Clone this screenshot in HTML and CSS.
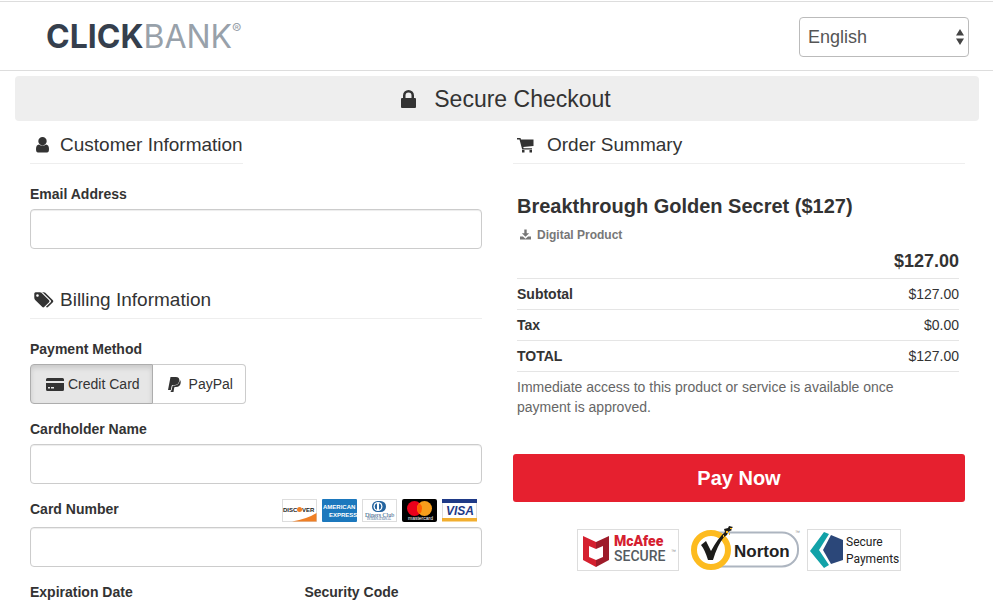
FILE: index.html
```html
<!DOCTYPE html>
<html lang="en">
<head>
    <meta charset="UTF-8">
    <meta name="viewport" content="width=device-width, initial-scale=1.0">
    <title>ClickBank - Secure Checkout</title>
    <link rel="stylesheet" href="styles.css">
</head>
<body>
    <header class="header">
        <a class="logo" href="#"><span class="logo-click">CLICK</span><span class="logo-bank">BANK</span><span class="logo-reg">®</span></a>
        <div class="language">
            <select class="language-select" aria-label="Language">
                <option>English</option>
            </select>
            <svg class="language-arrows" viewBox="0 0 8 16" aria-hidden="true"><path d="M0 6.500L4 0l4 6.500zM0 9.500h8L4 16z"/></svg>
        </div>
    </header>

    <main class="page">
        <h1 class="banner">
            <svg class="icon-lock" viewBox="0 0 15 18" aria-hidden="true"><path d="M0 9q0-1 1-1h1V5.500a5.500 5.500 0 0 1 11 0V8h1q1 0 1 1v8q0 1-1 1H1q-1 0-1-1zM4.500 8h6V5.500a3 3 0 0 0-6 0z"/></svg>
            Secure Checkout
        </h1>

        <div class="columns">
            <form class="details">
                <h2 class="section-title section-title-short">
                    <svg class="icon" viewBox="0 0 24 18" aria-hidden="true"><path d="M12.500 1a4.200 4.200 0 0 1 4.200 4.200c0 2-1.800 4.200-4.200 4.200S8.300 7.200 8.300 5.200A4.200 4.200 0 0 1 12.500 1zM9 8.500q3.500 2.600 7 0 3 .3 3 4.500 0 3.500-2 3.500H8q-2 0-2-3.500 0-4.200 3-4.500z"/></svg>
                    Customer Information
                </h2>
                <div class="form-group">
                    <label for="email">Email Address</label>
                    <input type="email" id="email" class="form-control">
                </div>

                <h2 class="section-title section-title-next">
                    <svg class="icon" viewBox="-300 0 2400 1800" aria-hidden="true"><path d="M576 448q0-53-37.500-90.500t-90.500-37.500-90.500 37.500-37.500 90.500 37.500 90.500 90.500 37.500 90.500-37.500 37.500-90.500zm1067 576q0 53-37 90l-491 492q-39 37-91 37-53 0-90-37l-715-716q-38-37-64.500-101t-26.500-117v-416q0-52 38-90t90-38h416q53 0 117 26.500t102 64.500l715 714q37 39 37 91zm384 0q0 53-37 90l-491 492q-39 37-91 37-36 0-59-14t-53-45l470-470q37-37 37-90 0-52-37-91l-715-714q-38-38-102-64.500t-117-26.500h224q53 0 117 26.500t102 64.500l715 714q37 39 37 91z"/></svg>
                    Billing Information
                </h2>
                <div class="form-group">
                    <span class="label" id="method">Payment Method</span>
                    <div class="btn-group" role="group" aria-labelledby="method">
                        <button type="button" class="btn active" aria-pressed="true">
                            <svg class="icon-card" viewBox="0 0 18 13" aria-hidden="true"><path d="M0 3V1.500Q0 0 1.500 0h15Q18 0 18 1.500V3zM0 5h18v6.500q0 1.500-1.500 1.500h-15Q0 13 0 11.500zM2 9v1.500h2V9zm3 0v1.500h3V9z"/></svg>
                            Credit Card
                        </button>
                        <button type="button" class="btn" aria-pressed="false">
                            <svg class="icon-paypal" viewBox="0 0 13 15" aria-hidden="true"><path d="M2.500 0h5.300q4 .2 3.500 3.700-.8 4.200-4.800 4.200H4.700q-.8 0-1 .8L2.800 13H0z"/><path d="M12 3q1 1 .7 3-.7 4-4.700 4H7q-.6 0-.8.800L5.500 15H2.600l.3-1.400h.6l1-4.500q.1-.6.7-.6h1.500Q11 8.300 12 3z"/></svg>
                            PayPal
                        </button>
                    </div>
                </div>
                <div class="form-group">
                    <label for="name">Cardholder Name</label>
                    <input type="text" id="name" class="form-control">
                </div>
                <div class="form-group">
                    <div class="label-row">
                        <label for="number">Card Number</label>
                        <div class="cards">
                            <svg class="card" viewBox="0 0 35 23" role="img" aria-label="Discover">
                                <rect x=".5" y=".5" width="34" height="22" fill="#fff" stroke="#ddd"/>
                                <path d="M34.500 14v8.500H10Q25 20 34.500 14z" fill="#ef7f25"/>
                                <text x="1" y="13" class="card-discover">DISC</text>
                                <circle cx="17.500" cy="10.500" r="2.500" fill="#ef7f25"/>
                                <text x="20" y="13" class="card-discover">VER</text>
                            </svg>
                            <svg class="card" viewBox="0 0 35 23" role="img" aria-label="American Express">
                                <rect width="35" height="23" rx="1" fill="#1c78bd"/>
                                <text x="1" y="10" class="card-amex">AMERICAN</text>
                                <text x="7" y="18" class="card-amex">EXPRESS</text>
                            </svg>
                            <svg class="card" viewBox="0 0 35 23" role="img" aria-label="Diners Club International">
                                <rect x=".5" y=".5" width="34" height="22" fill="#fff" stroke="#ddd"/>
                                <rect x="10" y="2" width="14" height="11" rx="5.500" fill="#24649f"/>
                                <circle cx="16" cy="7.500" r="4.500" fill="#fff"/>
                                <path d="M15 4.200a3.500 3.500 0 0 0 0 6.600zM17 4.200a3.500 3.500 0 0 1 0 6.600z" fill="#24649f"/>
                                <text x="3" y="18" class="card-diners">Diners Club</text>
                                <text x="5" y="21" class="card-diners-small">INTERNATIONAL</text>
                            </svg>
                            <svg class="card" viewBox="0 0 35 23" role="img" aria-label="Mastercard">
                                <rect width="35" height="23" rx="2" fill="#000"/>
                                <circle cx="12.500" cy="9.500" r="7.500" fill="#eb001b"/>
                                <circle cx="22.500" cy="9.500" r="7.500" fill="#f79e1b"/>
                                <path d="M17.500 3.900a7.500 7.500 0 0 1 0 11.200 7.500 7.500 0 0 1 0-11.200z" fill="#ff5f00"/>
                                <text x="6" y="21" class="card-master">mastercard</text>
                            </svg>
                            <svg class="card" viewBox="0 0 35 23" role="img" aria-label="Visa">
                                <rect width="35" height="23" fill="#fff"/>
                                <path d="M0 0h35v4H0z" fill="#1f3a87"/>
                                <path d="M0 19h35v3.500H0z" fill="#f2ae2e"/>
                                <path d="M.5 4v15M34.500 4v15" stroke="#ddd"/>
                                <text x="4" y="16" class="card-visa">VISA</text>
                            </svg>
                        </div>
                    </div>
                    <input type="text" id="number" class="form-control">
                </div>
                <div class="form-split">
                    <div class="form-group">
                        <label for="expiration">Expiration Date</label>
                        <input type="text" id="expiration" class="form-control">
                    </div>
                    <div class="form-group">
                        <label for="code">Security Code</label>
                        <input type="text" id="code" class="form-control">
                    </div>
                </div>
            </form>

            <section class="summary">
                <h2 class="section-title">
                    <svg class="icon" viewBox="0 0 24 18" aria-hidden="true"><path d="M4 2h3.500l.5 1.500h12.500V10l-10.200 1 .3 1.200H19v1.300H9.200L6.500 3.500H4z"/><path d="M9 14h2.500v2.500H9zM16.500 14H19v2.500h-2.500z"/></svg>
                    Order Summary
                </h2>
                <div class="order">
                    <h3 class="product">Breakthrough Golden Secret ($127)</h3>
                    <p class="product-type">
                        <svg class="icon-download" viewBox="0 0 12 12" aria-hidden="true"><path d="M4.700 0h2.600v4H10L6 8 2 4h2.700zM0 7.500h3.200L6 10.200l2.800-2.700H12V11H0z"/></svg>
                        Digital Product
                    </p>
                    <p class="price">$127.00</p>
                    <table class="totals">
                        <tbody>
                            <tr><th scope="row">Subtotal</th><td>$127.00</td></tr>
                            <tr><th scope="row">Tax</th><td>$0.00</td></tr>
                            <tr><th scope="row">TOTAL</th><td>$127.00</td></tr>
                        </tbody>
                    </table>
                    <p class="note">Immediate access to this product or service is available once payment is approved.</p>
                </div>
                <button type="button" class="btn-pay">Pay Now</button>
                <div class="badges">
                    <svg class="badge-mcafee" viewBox="0 0 102 42" role="img" aria-label="McAfee Secure">
                        <rect x=".5" y=".5" width="101" height="41" fill="#fff" stroke="#ddd"/>
                        <path d="M6 7l13 6v7l-7-3v11l7 3v7L6 31z" fill="#d5202f"/>
                        <path d="M32 7l-13 6v7l7-3v11l-7 3v7l13-7z" fill="#9e1c2a"/>
                        <text x="37" y="17" class="mcafee-name">McAfee</text>
                        <text x="37" y="32" class="mcafee-secure">SECURE</text>
                        <text x="94" y="24" class="badge-tm">™</text>
                    </svg>
                    <svg class="badge-norton" viewBox="0 0 110 46" role="img" aria-label="Norton">
                        <rect x="13" y="7.500" width="94" height="34" rx="16" fill="#fff" stroke="#adb5c0" stroke-width="2"/>
                        <circle cx="20" cy="25" r="17" fill="#fff" stroke="#fdbb1f" stroke-width="6"/>
                        <path d="M10 20l5-4 5 10Q27 13 34 7l-1-3 4-1 1-2 4 1-2 2 1 1-4 2-1 3-3 2Q26 21 22 35h-5Q14 25 10 20z" fill="#1c1c1a"/>
                        <path d="M35 6h2v2h-2zM39 3h2v1h-2zM32 10h1v2h-1zM38 8h1v2h-1z" fill="#fdbb1f"/>
                        <text x="43" y="32" class="norton-name">Norton</text>
                        <text x="104" y="9" class="badge-tm">™</text>
                    </svg>
                    <svg class="badge-secure" viewBox="0 0 94 42" role="img" aria-label="Secure Payments">
                        <rect x=".5" y=".5" width="93" height="41" fill="#fff" stroke="#ddd"/>
                        <path d="M17 3l5 2-10 16 10 15-5 3L3 22z" fill="#12a2a8"/>
                        <path d="M24 6l12 5v20l-12 4-8-14z" fill="#2b4779"/>
                        <text x="39" y="17" class="secure-text">Secure</text>
                        <text x="39" y="34" class="secure-text">Payments</text>
                    </svg>
                </div>
            </section>
        </div>
    </main>
</body>
</html>
```
FILE: styles.css
```css
* { box-sizing: border-box; }
body { margin: 0; background: #fff; color: #333; font-family: "Liberation Sans", Arial, sans-serif; font-size: 14px; line-height: 20px; }
h1, h2, h3, p { margin: 0; }
svg { display: block; fill: currentColor; flex: none; }

/* header */
.header { display: flex; justify-content: space-between; align-items: center; margin-top: 1px; padding: 15px 24px 13px 46px; border-top: 1px solid #ddd; border-bottom: 1px solid #ddd; }
.logo { display: flex; font-family: Inter, sans-serif; font-size: 32px; line-height: 40px; color: #353f4d; text-decoration: none; }
.logo-click { font-weight: 700; }
.logo-bank { font-weight: 400; color: #98a1aa; }
.logo-reg { font-size: 14px; line-height: 24px; color: #98a1aa; }
.language { position: relative; width: 170px; }
.language-select { appearance: none; width: 100%; height: 40px; padding: 0 8px; border: 1px solid #bbb; border-radius: 4px; background: #fff; color: #555; font: inherit; font-size: 18px; }
.language-arrows { position: absolute; right: 5px; top: 12px; width: 8px; height: 16px; color: #444; pointer-events: none; }

.page { padding: 5px 14px 0 15px; }
.banner { display: flex; justify-content: center; align-items: center; gap: 18px; padding-left: 18px; height: 45px; border-radius: 4px; background: #eee; font-size: 23px; font-weight: 400; }
.icon-lock { width: 15px; height: 18px; }
.columns { display: grid; grid-template-columns: 1fr 1fr; gap: 31px; padding: 12px 14px 0 15px; }

.section-title { display: flex; align-items: center; gap: 6px; padding-bottom: 6px; margin-bottom: 20px; border-bottom: 1px solid #eee; font-size: 19px; font-weight: 400; line-height: 24px; }
.section-title-short { width: fit-content; }
.section-title-next { margin-top: 39px; }
.icon { width: 24px; height: 18px; }

/* form */
.form-group { margin-bottom: 15px; }
label, .label { display: block; margin-bottom: 5px; font-weight: 700; }
.form-control { display: block; width: 100%; height: 40px; padding: 6px 12px; border: 1px solid #ccc; border-radius: 4px; background: #fff; font: inherit; box-shadow: inset 0 1px 1px rgba(0, 0, 0, .075); }
.btn-group { display: flex; }
.btn { display: flex; align-items: center; gap: 8px; height: 40px; padding: 0 12px 0 15px; border: 1px solid #ccc; border-left: 0; border-radius: 0 4px 4px 0; background: #fff; color: #333; font: inherit; }
.btn.active { gap: 4px; border: 1px solid #adadad; border-radius: 4px 0 0 4px; background: #e6e6e6; box-shadow: inset 0 3px 5px rgba(0, 0, 0, .125); }
.icon-card { width: 18px; height: 13px; }
.icon-paypal { width: 13px; height: 15px; }
.label-row { display: flex; justify-content: space-between; margin-bottom: 5px; }
.label-row label { margin: 0; }
.cards { display: flex; gap: 5px; margin-right: 5px; }
.card { width: 35px; height: 23px; }
.card-discover { font: bold 6px "Liberation Sans", sans-serif; fill: #222; }
.card-amex { font: bold 6px "Liberation Sans", sans-serif; fill: #fff; }
.card-diners { font: 6px "Liberation Serif", serif; fill: #24507c; }
.card-diners-small { font: 3px "Liberation Serif", serif; fill: #24507c; }
.card-master { font: 5px "Liberation Sans", sans-serif; fill: #fff; }
.card-visa { font: italic bold 12px "Liberation Sans", sans-serif; fill: #1f3a87; }
.form-split { display: grid; grid-template-columns: 3fr 2fr; gap: 8px; }

/* order summary */
.summary .section-title { gap: 10px; }
.order { padding: 10px 6px 0 4px; }
.product { font-size: 20px; line-height: 24px; }
.product-type { display: flex; align-items: center; gap: 6px; margin-top: 7px; padding-left: 3px; color: #777; font-size: 12px; font-weight: 700; }
.icon-download { width: 11px; height: 12px; }
.price { margin-top: 4px; padding-bottom: 5px; font-size: 18px; font-weight: 700; line-height: 24px; text-align: right; }
.totals { width: 100%; border-collapse: collapse; }
.totals tr { border-top: 1px solid #e5e5e5; border-bottom: 1px solid #e5e5e5; }
.totals th { padding: 5px 0; text-align: left; }
.totals td { padding: 5px 0; text-align: right; }
.note { margin-top: 5px; padding-right: 30px; color: #666; }
.btn-pay { display: block; width: 100%; height: 48px; margin-top: 37px; border: 0; border-radius: 3px; background: #e6202f; color: #fff; font: inherit; font-size: 20px; font-weight: 700; }

.badges { display: flex; justify-content: center; align-items: flex-end; gap: 6px; margin-top: 23px; }
.badge-mcafee { width: 102px; height: 42px; margin-right: 6px; }
.badge-norton { width: 110px; height: 46px; }
.badge-secure { width: 94px; height: 42px; }
.badge-tm { font: 5px "Liberation Sans", sans-serif; fill: #888; }
.mcafee-name { font: 900 14px Roboto, sans-serif; fill: #d5202f; }
.mcafee-secure { font: 500 14px Roboto, sans-serif; fill: #555b61; }
.norton-name { font: bold 17px "Liberation Sans", sans-serif; fill: #222; }
.secure-text { font: 400 12px Roboto, sans-serif; fill: #222; }
```
